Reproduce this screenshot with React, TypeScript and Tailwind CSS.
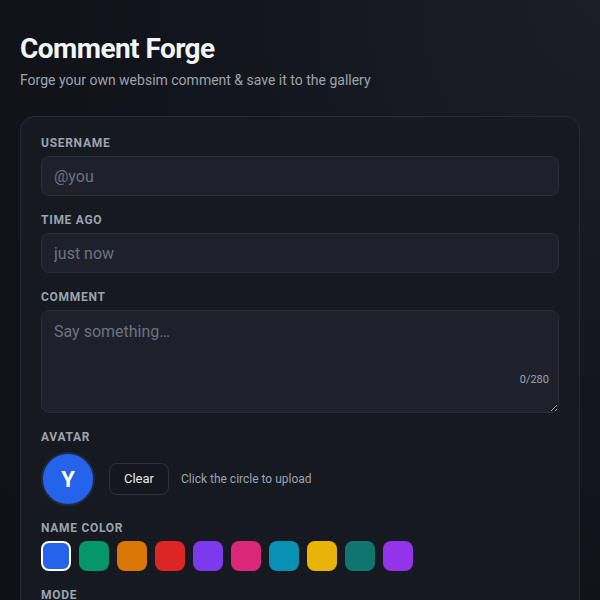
const swatches = [
  "bg-[#2563eb]",
  "bg-[#059669]",
  "bg-[#d97706]",
  "bg-[#dc2626]",
  "bg-[#7c3aed]",
  "bg-[#db2777]",
  "bg-[#0891b2]",
  "bg-[#eab308]",
  "bg-[#0f766e]",
  "bg-[#9333ea]",
];

const Label = ({ children }: { children: string }) => (
  <div className="text-[12px] leading-4 font-bold tracking-[0.06em] uppercase text-[#9ca3af] mb-[5px]">
    {children}
  </div>
);

const App = () => {
  return (
    <div
      className="min-h-screen bg-[radial-gradient(ellipse_at_top_right,#1b1e27_0%,#12141b_55%,#0e1015_100%)] px-5 pt-8 pb-10 text-white"
      style={{ fontFamily: "Roboto, 'Noto Sans', sans-serif" }}
    >
      <h1 className="text-[28px] leading-[34px] font-bold text-[#f3f4f6] tracking-[-0.02em]">
        Comment Forge
      </h1>
      <p className="mt-1 text-[14px] leading-5 text-[#9ca3af]">
        Forge your own websim comment &amp; save it to the gallery
      </p>

      <div className="mt-[26px] rounded-[14px] border border-[#272b35] bg-[#161920] px-5 pt-[18px] pb-6">
        <Label>Username</Label>
        <input
          placeholder="@you"
          className="w-full h-10 rounded-lg border border-[#2a2e39] bg-[#1e212b] px-3 text-[16px] text-white placeholder-[#6b7280] outline-none"
        />

        <div className="mt-4">
          <Label>Time ago</Label>
          <input
            placeholder="just now"
            className="w-full h-10 rounded-lg border border-[#2a2e39] bg-[#1e212b] px-3 text-[16px] text-white placeholder-[#6b7280] outline-none"
          />
        </div>

        <div className="mt-4">
          <Label>Comment</Label>
          <div className="relative">
            <textarea
              placeholder="Say something…"
              className="block w-full h-[103px] rounded-lg border border-[#2a2e39] bg-[#1e212b] px-3 py-[9px] text-[16px] text-white placeholder-[#6b7280] outline-none"
            />
            <span className="absolute right-[10px] bottom-[25px] text-[11px] text-[#9ca3af]">
              0/280
            </span>
          </div>
        </div>

        <div className="mt-4">
          <Label>Avatar</Label>
          <div className="flex items-center mt-[7px]">
            <div className="w-[54px] h-[54px] rounded-full bg-[#2563eb] border-2 border-[#1f2a44] flex items-center justify-center text-[22px] font-bold text-white">
              Y
            </div>
            <button className="ml-[14px] h-8 px-[14px] rounded-lg border border-[#2d313b] bg-[#14171d] text-[13px] text-[#e5e7eb]">
              Clear
            </button>
            <span className="ml-3 text-[12px] text-[#9ca3af]">
              Click the circle to upload
            </span>
          </div>
        </div>

        <div className="mt-[14px]">
          <Label>Name color</Label>
          <div className="flex gap-2">
            {swatches.map((c, i) => (
              <div
                key={i}
                className={`w-[30px] h-[30px] rounded-lg ${c} ${
                  i === 0 ? "border-2 border-white" : ""
                }`}
              />
            ))}
          </div>
        </div>

        <div className="mt-4">
          <Label>Mode</Label>
        </div>
      </div>
    </div>
  );
};

export default App;
